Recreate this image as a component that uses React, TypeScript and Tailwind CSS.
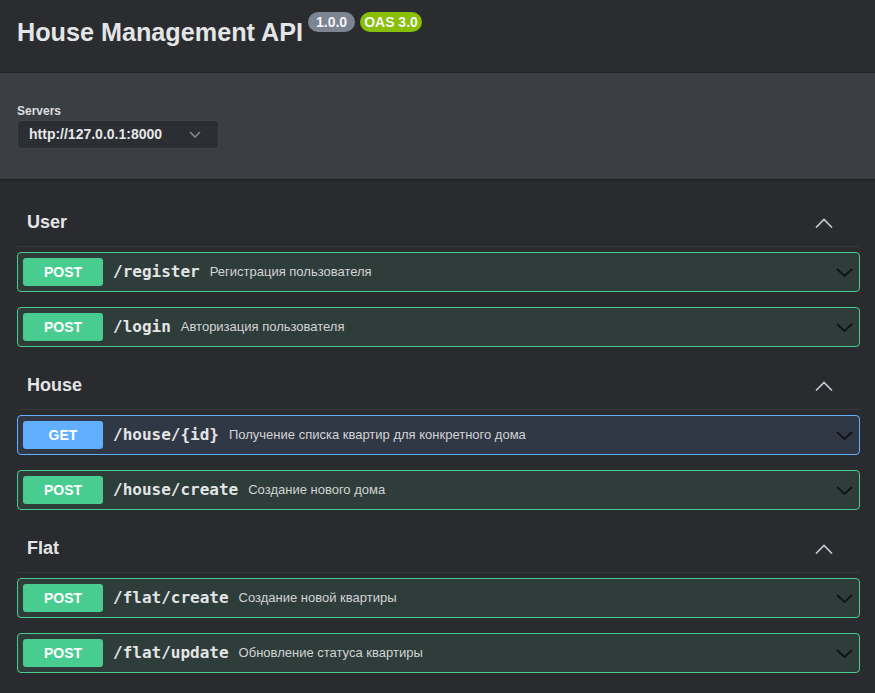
type Op = {
  method: "GET" | "POST";
  path: string;
  summary: string;
};

type Tag = {
  name: string;
  ops: Op[];
};

const tags: Tag[] = [
  {
    name: "User",
    ops: [
      { method: "POST", path: "/register", summary: "Регистрация пользователя" },
      { method: "POST", path: "/login", summary: "Авторизация пользователя" },
    ],
  },
  {
    name: "House",
    ops: [
      {
        method: "GET",
        path: "/house/{id}",
        summary: "Получение списка квартир для конкретного дома",
      },
      { method: "POST", path: "/house/create", summary: "Создание нового дома" },
    ],
  },
  {
    name: "Flat",
    ops: [
      { method: "POST", path: "/flat/create", summary: "Создание новой квартиры" },
      { method: "POST", path: "/flat/update", summary: "Обновление статуса квартиры" },
    ],
  },
];

const ChevronDown = ({ className }: { className?: string }) => (
  <svg width="17" height="9" viewBox="0 0 17 9" fill="none" className={className}>
    <polyline points="1,1 8.5,8 16,1" stroke="currentColor" strokeWidth="1.8" />
  </svg>
);

const ChevronUp = () => (
  <svg width="18" height="10" viewBox="0 0 18 10" fill="none" className="text-[#c9ced4]">
    <polyline points="1,9.5 9,1.5 17,9.5" stroke="currentColor" strokeWidth="1.6" />
  </svg>
);

const OpBlock = ({ op }: { op: Op }) => {
  const isGet = op.method === "GET";
  return (
    <div
      className={`mb-[15px] flex h-[40px] items-center rounded-[4px] border p-[5px] ${
        isGet ? "border-[#61affe] bg-[#313845]" : "border-[#49cc90] bg-[#2e3d3a]"
      }`}
    >
      <span
        className={`flex h-[28px] w-[80px] shrink-0 items-center justify-center rounded-[3px] text-[14px] font-bold text-white ${
          isGet ? "bg-[#61affe]" : "bg-[#49cc90]"
        }`}
      >
        {op.method}
      </span>
      <span className="pl-[10px] font-['DejaVu_Sans_Mono',monospace] text-[16px] font-bold text-[#e3e4e6]">
        {op.path}
      </span>
      <span className="pl-[10px] text-[13px] text-[#d2d3d5]">{op.summary}</span>
      <ChevronDown className="ml-auto mr-[1px] text-[#111214]" />
    </div>
  );
};

export default function App() {
  return (
    <div className="min-h-screen bg-[#292b2f] font-['Liberation_Sans',Arial,sans-serif]">
      <div className="flex h-[72px] items-start bg-[#2a2c30] px-[17px]">
        <h1 className="mt-[18px] text-[25.2px] font-bold leading-[29px] text-[#e4e5e7]">
          House Management API
        </h1>
        <span className="ml-[5px] mt-[12px] rounded-full bg-[#7d8492] px-[8px] text-[14px] font-bold leading-[20px] text-[#f4f4f4]">
          1.0.0
        </span>
        <span className="ml-[5px] mt-[12px] rounded-full bg-[#89bf04] px-[4px] text-[14px] font-bold leading-[20px] text-[#f4f4f4]">
          OAS 3.0
        </span>
      </div>

      <div className="border-t border-[#232529] bg-[#3b3f43] px-[17px] pb-[30px] pt-[30px] shadow-[0_1px_2px_rgba(0,0,0,0.3)]">
        <div className="text-[12px] font-bold leading-[16px] text-[#dcdde0]">Servers</div>
        <div className="mt-[1px] flex h-[29px] w-[202px] items-center rounded-[4px] border border-[#41454b] bg-[#2b2e32] pl-[11px] pr-[17px]">
          <span className="text-[14px] font-bold text-[#e6e7e9]">http://127.0.0.1:8000</span>
          <svg width="12" height="7" viewBox="0 0 12 7" fill="none" className="ml-auto text-[#84878c]">
            <polyline points="1,1 6,6 11,1" stroke="currentColor" strokeWidth="1.6" />
          </svg>
        </div>
      </div>

      <div className="pl-[17px] pr-[15px] pt-[20px]">
        {tags.map((tag) => (
          <section key={tag.name}>
            <div className="mb-[5px] flex h-[48px] items-center justify-between border-b border-[#36383d] pl-[10px] pr-[27px]">
              <h3 className="text-[18px] font-bold text-[#e4e5e7]">{tag.name}</h3>
              <ChevronUp />
            </div>
            {tag.ops.map((op) => (
              <OpBlock key={op.path} op={op} />
            ))}
          </section>
        ))}
      </div>
    </div>
  );
}
